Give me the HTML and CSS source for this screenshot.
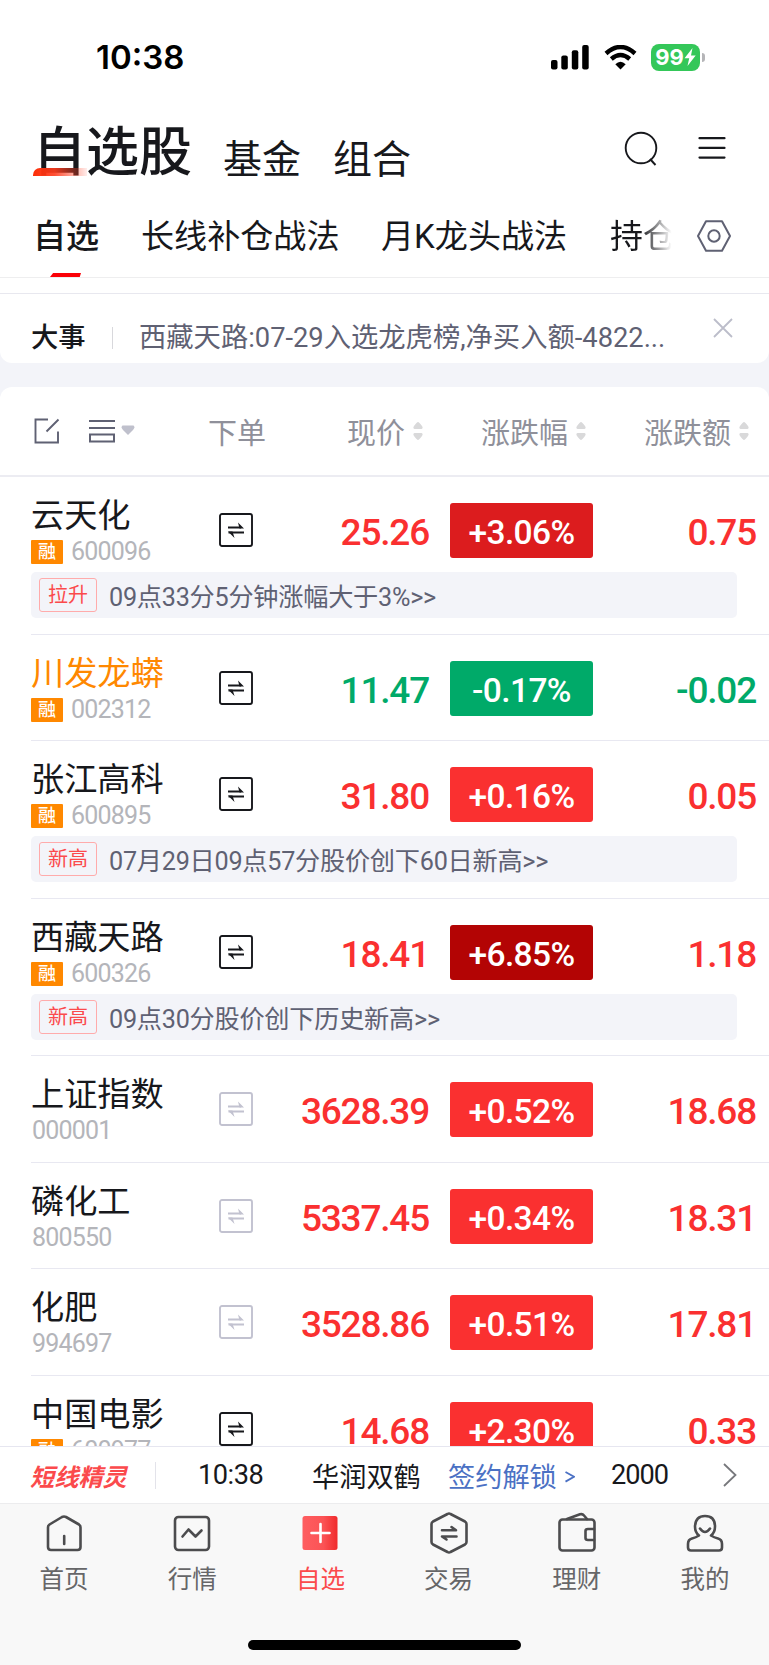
FILE: index.html
```html
<!DOCTYPE html>
<html lang="zh-CN">
<head>
  <meta charset="UTF-8" />
  <meta name="viewport" content="width=device-width, initial-scale=1" />
  <title>自选股</title>
  <link rel="stylesheet" href="styles.css">
</head>
<body>
  <svg class="defs" width="0" height="0">
    <symbol id="swap" viewBox="0 0 34 34">
      <rect x="1" y="1" width="32" height="32" rx="2" fill="none" stroke="currentColor" stroke-width="1.9"/>
      <path d="M9 14.500H22M9.500 19.500H25" fill="none" stroke="currentColor" stroke-width="1.9"/>
      <path d="M19 9.500L25 15.400H20.500ZM15.500 25L9 18.600H13.500Z" fill="currentColor"/>
    </symbol>
    <symbol id="sort" viewBox="0 0 10 20">
      <path d="M5 1Q6 1 9 5Q10.500 7.500 8.500 8H1.500Q-.5 7.500 1 5Q4 1 5 1ZM5 19Q6 19 9 15Q10.500 12.500 8.500 12H1.500Q-.5 12.500 1 15Q4 19 5 19Z" fill="#d9d9da"/>
    </symbol>
  </svg>

  <div class="phone">
    <div class="status">
      <span class="clock">10:38</span>
      <svg class="signal" width="38" height="25" viewBox="0 0 38 25">
        <rect x="0" y="15" width="6.500" height="9.500" rx="2"/>
        <rect x="10.300" y="10.500" width="6.500" height="14" rx="2"/>
        <rect x="20.800" y="5.200" width="6.500" height="19.300" rx="2"/>
        <rect x="31.200" y="0" width="6.500" height="24.500" rx="2"/>
      </svg>
      <svg class="wifi" width="33" height="25" viewBox="0 0 33 25">
        <path d="M2 8.500Q16.500-4.500 31 8.500" fill="none" stroke="#000" stroke-width="4.400"/>
        <path d="M7.300 14Q16.500 6 25.700 14" fill="none" stroke="#000" stroke-width="4.400"/>
        <path d="M16.500 24.500L11.300 19.300Q16.500 14 21.700 19.300Z"/>
      </svg>
      <div class="battery">
        <span>99</span>
        <svg width="12" height="18" viewBox="0 0 12 18"><path d="M8.500 0L.5 10.200H5.200L3.500 18L11.700 7.400H7Z" fill="#fff"/></svg>
      </div>
      <i class="battery-cap"></i>
    </div>

    <header class="top">
      <a class="title">自选股</a>
      <a class="other">基金</a>
      <a class="other">组合</a>
      <svg class="search" width="34" height="36" viewBox="0 0 34 36" fill="none" stroke="#17181c" stroke-width="1.900">
        <circle cx="17" cy="17" r="15.300"/><path d="M26 28L31.500 34"/>
      </svg>
      <svg class="menu" width="28" height="24" viewBox="0 0 28 24" stroke="#17181c" stroke-width="2.200" stroke-linecap="round">
        <path d="M1.500 2.200H26.500M1.500 11.900H26.500M1.500 21.600H26.500"/>
      </svg>
    </header>

    <nav class="groups">
      <a class="active">自选</a>
      <a class="g2">长线补仓战法</a>
      <a class="g3">月K龙头战法</a>
      <a class="g4">持仓</a>
      <svg width="36" height="34" viewBox="0 0 36 34" fill="none" stroke="#5f6173" stroke-width="2" stroke-linejoin="round">
        <path d="M10 2.200H26L34 17L26 31.700H10L2 17Z"/><circle cx="18" cy="17" r="5.700"/>
      </svg>
    </nav>

    <div class="notice">
      <b>大事</b>
      <i></i>
      <span>西藏天路:07-29入选龙虎榜,净买入额-4822...</span>
      <svg width="20" height="20" viewBox="0 0 20 20" stroke="#bcbdca" stroke-width="1.800"><path d="M1 1L19 19M19 1L1 19"/></svg>
    </div>

    <main class="list">
      <div class="row head">
        <div class="tools">
          <svg width="26" height="26" viewBox="0 0 26 26" fill="none" stroke="#5f6173" stroke-width="1.900">
            <path d="M14 1.500H1.500V24.500H24V13.500M12.500 13.500L24.500 1.500"/>
          </svg>
          <svg class="layout" width="46" height="24" viewBox="0 0 46 24" fill="none" stroke="#5f6173" stroke-width="2">
            <path d="M0 2H26M0 9H26M1 15.500H25V22.500H1Z"/>
            <path d="M33.500 6.500H44.500Q46.500 8 44 11L39 16L34 11Q31.500 8 33.500 6.500Z" fill="#bfc0cc" stroke="none"/>
          </svg>
        </div>
        <span class="order">下单</span>
        <span class="col">现价<svg><use href="#sort"/></svg></span>
        <span class="col c2">涨跌幅<svg><use href="#sort"/></svg></span>
        <span class="col c3">涨跌额<svg><use href="#sort"/></svg></span>
      </div>

      <section class="stock">
        <div class="row">
          <div class="name">云天化<small><em>融</em>600096</small></div>
          <svg class="swap"><use href="#swap"/></svg>
          <span class="price">25.26</span><span class="pct strong">+3.06%</span><span class="diff">0.75</span>
        </div>
        <div class="alert"><b>拉升</b>09点33分5分钟涨幅大于3%&gt;&gt;</div>
      </section>
      <section class="stock down">
        <div class="row">
          <div class="name hot">川发龙蟒<small><em>融</em>002312</small></div>
          <svg class="swap"><use href="#swap"/></svg>
          <span class="price">11.47</span><span class="pct">-0.17%</span><span class="diff">-0.02</span>
        </div>
      </section>
      <section class="stock">
        <div class="row">
          <div class="name">张江高科<small><em>融</em>600895</small></div>
          <svg class="swap"><use href="#swap"/></svg>
          <span class="price">31.80</span><span class="pct">+0.16%</span><span class="diff">0.05</span>
        </div>
        <div class="alert"><b>新高</b>07月29日09点57分股价创下60日新高&gt;&gt;</div>
      </section>
      <section class="stock">
        <div class="row">
          <div class="name">西藏天路<small><em>融</em>600326</small></div>
          <svg class="swap"><use href="#swap"/></svg>
          <span class="price">18.41</span><span class="pct deep">+6.85%</span><span class="diff">1.18</span>
        </div>
        <div class="alert"><b>新高</b>09点30分股价创下历史新高&gt;&gt;</div>
      </section>
      <section class="stock">
        <div class="row">
          <div class="name">上证指数<small>000001</small></div>
          <svg class="swap off"><use href="#swap"/></svg>
          <span class="price">3628.39</span><span class="pct">+0.52%</span><span class="diff">18.68</span>
        </div>
      </section>
      <section class="stock">
        <div class="row">
          <div class="name">磷化工<small>800550</small></div>
          <svg class="swap off"><use href="#swap"/></svg>
          <span class="price">5337.45</span><span class="pct">+0.34%</span><span class="diff">18.31</span>
        </div>
      </section>
      <section class="stock">
        <div class="row">
          <div class="name">化肥<small>994697</small></div>
          <svg class="swap off"><use href="#swap"/></svg>
          <span class="price">3528.86</span><span class="pct">+0.51%</span><span class="diff">17.81</span>
        </div>
      </section>
      <section class="stock">
        <div class="row">
          <div class="name">中国电影<small><em>融</em>600977</small></div>
          <svg class="swap"><use href="#swap"/></svg>
          <span class="price">14.68</span><span class="pct">+2.30%</span><span class="diff">0.33</span>
        </div>
      </section>
    </main>

    <div class="ticker">
      <b>短线精灵</b>
      <i></i>
      <span class="time">10:38</span>
      <span class="who">华润双鹤</span>
      <a>签约解锁 <svg width="10" height="12" viewBox="0 0 10 12" fill="none" stroke="#4b71c4" stroke-width="1.800"><path d="M.5 1L9 5.800L.5 10.600"/></svg></a>
      <span class="amount">2000</span>
      <svg width="14" height="24" viewBox="0 0 14 24" fill="none" stroke="#77787c" stroke-width="1.800"><path d="M1 1L12.500 12L1 23"/></svg>
    </div>

    <footer class="tabbar">
      <a>
        <svg viewBox="0 0 44 44"><path d="M22 5.500Q23 5.500 24 6L37 13.500Q38.500 14.500 38.500 16.500V36Q38.500 39 35.500 39H9Q6 39 6 36V16.500Q6 14.500 7.500 13.500L20 6Q21 5.500 22 5.500ZM22.200 25V33"/></svg>
        首页
      </a>
      <a>
        <svg viewBox="0 0 44 44"><rect x="5" y="6" width="34" height="33" rx="3.500"/><path d="M12.500 25.500L18.500 18.500L25.500 25.500L31.500 19.500"/></svg>
        行情
      </a>
      <a class="on">
        <svg viewBox="0 0 44 44">
          <defs><linearGradient id="red"><stop offset="0" stop-color="#fe5d60"/><stop offset=".6" stop-color="#fb5355"/><stop offset="1" stop-color="#f02a2b"/></linearGradient></defs>
          <rect x="4.500" y="5" width="35" height="34" rx="2.500" fill="url(#red)" stroke="none"/><path d="M13.500 22H31.500M22.500 13V31" stroke="#fff"/>
        </svg>
        自选
      </a>
      <a>
        <svg viewBox="0 0 44 44"><path d="M20.500 3Q22 2 23.500 3L38 10.500Q39.500 11.500 39.500 13V31Q39.500 32.500 38 33.500L23.500 41Q22 42 20.500 41L6 33.500Q4.500 32.500 4.500 31V13Q4.500 11.500 6 10.500Z"/><path d="M15 19.300H29L24.500 16M29.500 25.500H15L19.500 28.500"/></svg>
        交易
      </a>
      <a>
        <svg viewBox="0 0 44 44"><rect x="4.500" y="8.500" width="35" height="31" rx="3"/><path d="M12 8L25 3.300Q27.500 2.500 29 4.500L32 8M39 18H33Q30.500 18 30.500 20V27Q30.500 29 33 29H39"/></svg>
        理财
      </a>
      <a>
        <svg viewBox="0 0 44 44"><path d="M16 24.500Q12 21.500 12 15.500Q12.500 5 22 5Q32 5 32 15.500Q32 21.500 28 24.500Q31 26.500 35 27.500Q39 28.500 39 33V36.500Q39 39.500 36 39.500H8Q5 39.500 5 36.500V33Q5 28.500 9 27.500Q13 26.500 16 24.500ZM17 17.500Q22 24.500 27 17.500"/></svg>
        我的
      </a>
      <div class="home-bar"></div>
    </footer>
  </div>
</body>
</html>
```

FILE: styles.css
```css
* {
  box-sizing: border-box;
}
body {
  margin: 0;
  font-family: Roboto, "Noto Sans CJK SC", sans-serif;
  color: #17181c;
  background: #fff;
}
i, em {
  font-style: normal;
}
svg {
  display: block;
  flex: none;
}
.defs {
  position: absolute;
}
.phone {
  width: 769px;
  height: 1665px;
  display: flex;
  flex-direction: column;
  overflow: hidden;
  white-space: nowrap;
}

/* status bar */
.status {
  height: 114px;
  flex: none;
  display: flex;
  align-items: center;
  padding-left: 96px;
  color: #000;
}
.clock {
  width: 455px;
  font: 600 33px/40px Inter, sans-serif;
}
.wifi {
  margin-left: 15px;
}
.battery {
  width: 49px;
  height: 27px;
  margin-left: 14px;
  border-radius: 8px;
  background: #34c759;
  color: #fff;
  font: 700 22px/27px Inter, sans-serif;
  display: flex;
  align-items: center;
  justify-content: center;
}
.battery-cap {
  width: 3px;
  height: 9px;
  margin-left: 2px;
  border-radius: 0 3px 3px 0;
  background: #b5b5b8;
}

/* page title tabs */
.top {
  height: 77px;
  flex: none;
  display: flex;
  align-items: center;
  padding-left: 33px;
}
.title {
  width: 190px;
  font-size: 53px;
  font-weight: 500;
  line-height: 72px;
  position: relative;
}
.title::before {
  content: "";
  position: absolute;
  left: 0;
  bottom: 13px;
  width: 54px;
  height: 8px;
  border-radius: 7px 0 0 0;
  background: linear-gradient(90deg, #fc2d06, rgba(255, 60, 30, .9) 40%, rgba(255, 80, 60, .1));
}
.other {
  width: 110px;
  margin-top: 7px;
  font-size: 39px;
}
.search {
  margin-left: 181px;
  margin-top: -7px;
}
.menu {
  margin-left: 40px;
  margin-top: -9px;
}

/* watchlist groups */
.groups {
  height: 87px;
  flex: none;
  display: flex;
  align-items: center;
  padding-left: 33px;
  font-size: 33.1px;
  border-bottom: 1px solid #eeeeef;
}
.groups .active {
  width: 108px;
  height: 86px;
  line-height: 92px;
  font-weight: 500;
  position: relative;
}
.active::after {
  content: "";
  position: absolute;
  left: 17px;
  bottom: 0;
  width: 31px;
  height: 4px;
  background: #fb0007;
  clip-path: polygon(10% 0, 100% 0, 96% 100%, 0 100%);
}
.g2 {
  width: 240px;
}
.g3 {
  width: 229px;
}
.g4 {
  width: 67px;
  -webkit-mask-image: linear-gradient(90deg, #000 46%, transparent 92%);
  mask-image: linear-gradient(90deg, #000 46%, transparent 92%);
}
.groups svg {
  margin-left: 19px;
  margin-top: 3px;
}

/* notice */
.notice {
  height: 70px;
  flex: none;
  display: flex;
  align-items: center;
  margin-top: 15px;
  padding: 13px 0 0 31px;
  border-top: 1px solid #e8e8ef;
  border-radius: 0 0 12px 12px;
  background: #fff;
  box-shadow: 0 15px 0 #f3f4f9;
  font-size: 27.3px;
  color: #5f6173;
}
.notice b {
  width: 81px;
  font-weight: 500;
  color: #17181c;
}
.notice i {
  width: 1px;
  height: 22px;
  margin-top: 6px;
  background: #d8d8dc;
}
.notice span {
  width: 574px;
  padding-left: 26px;
  margin-right: 26px;
}
.notice svg {
  margin-top: -14px;
}

/* stock list */
.list {
  height: 1083px;
  flex: none;
  overflow: hidden;
  padding-top: 24px;
  background: #f3f4f9;
}
.row {
  display: grid;
  grid-template-columns: 188px 35px 176px 163px 163px;
  height: 106px;
  padding-left: 31px;
}
.head {
  height: 90px;
  grid-template-columns: 177px 139px 134px 163px 140px;
  align-items: center;
  font-size: 29px;
  color: #8f909a;
  background: #fff;
  border-radius: 12px 12px 0 0;
  border-bottom: 2px solid #ececf2;
}
.tools {
  display: flex;
  align-items: center;
  padding-left: 3px;
  gap: 29px;
}
.col {
  display: flex;
  align-items: center;
}
.col svg {
  width: 10px;
  height: 20px;
  margin-left: 8px;
}
.stock {
  background: linear-gradient(#e8e8f1, #e8e8f1) 31px 100% / 100% 1px no-repeat #fff;
  height: 106.5px;
}
.stock:has(.alert) {
  height: 157.5px;
}
.name {
  padding: 14px 0 0;
  font-size: 33.2px;
  line-height: 49px;
}
.hot {
  color: #ff8800;
}
.name small {
  display: flex;
  align-items: center;
  height: 24px;
  padding-left: 1px;
  font-size: 25px;
  line-height: 26px;
  letter-spacing: -.8px;
  color: #b4b5ba;
}
.name em {
  width: 32px;
  height: 24px;
  margin: 0 8px 0 -1px;
  background: #ff8800;
  border-radius: 1px;
  color: #fff;
  font-size: 18px;
  font-weight: 500;
  letter-spacing: 0;
  line-height: 23px;
  text-align: center;
}
.swap {
  width: 34px;
  height: 34px;
  margin-top: 36px;
}
.swap.off {
  color: #c2c2d0;
}
.price, .diff {
  padding-right: 1px;
  text-align: right;
  font-size: 37px;
  font-weight: 500;
  letter-spacing: -1.2px;
  line-height: 112px;
  color: #fa3030;
}
.diff {
  padding-right: 0;
}
.pct {
  width: 143px;
  height: 55px;
  margin: 26px 0 0 20px;
  border-radius: 3px;
  background: #fa3030;
  color: #fff;
  font-size: 33.5px;
  font-weight: 500;
  letter-spacing: -.6px;
  line-height: 60px;
  text-align: center;
}
.pct.strong {
  background: #dc1c1e;
}
.pct.deep {
  background: #b30404;
}
.down .price, .down .diff {
  color: #00aa69;
}
.down .pct {
  background: #00aa69;
}
.alert {
  display: flex;
  align-items: center;
  width: 706px;
  height: 46px;
  margin: -11px 0 0 31px;
  padding-left: 8px;
  border-radius: 5px;
  background: #f3f4f9;
  color: #5f6173;
  font-size: 25.2px;
  letter-spacing: -.25px;
}
.alert b {
  width: 58px;
  height: 34px;
  margin-right: 12px;
  border: 1px solid #ffabab;
  border-radius: 3px;
  color: #fb4a4c;
  font-size: 20px;
  font-weight: 400;
  letter-spacing: 0;
  line-height: 33px;
  text-align: center;
}

/* short-term ticker */
.ticker {
  height: 57px;
  flex: none;
  display: flex;
  align-items: center;
  padding-left: 30px;
  border-top: 1px solid #e6e6f0;
  background: #fff;
  font-size: 27.2px;
}
.ticker b {
  width: 125px;
  font-size: 24.2px;
  font-weight: 700;
  font-style: italic;
  color: #fb4a4c;
}
.ticker i {
  width: 1px;
  height: 27px;
  background: #e3e3ea;
}
.time {
  width: 156px;
  padding-left: 42px;
  letter-spacing: -.5px;
}
.who {
  width: 136px;
}
.ticker a {
  display: flex;
  align-items: center;
  width: 163px;
  color: #4b71c4;
}
.ticker a svg {
  margin: 4px 0 0 8px;
}
.amount {
  width: 112px;
  letter-spacing: -1px;
}

/* bottom tabs */
.tabbar {
  height: 162px;
  flex: none;
  display: grid;
  grid-template-columns: repeat(6, 1fr);
  grid-template-rows: 136px 1fr;
  border-top: 1px solid #ececee;
  background: #f8f8f8;
}
.tabbar a {
  padding-top: 7px;
  font-size: 24.5px;
  line-height: 43px;
  text-align: center;
  color: #666668;
}
.tabbar svg {
  width: 44px;
  height: 44px;
  margin: 0 auto 3px;
  fill: none;
  stroke: #4c4c4e;
  stroke-width: 2.6;
  stroke-linecap: round;
  stroke-linejoin: round;
}
.tabbar .on {
  color: #fb4a4c;
}
.home-bar {
  grid-column: 1 / -1;
  justify-self: center;
  width: 273px;
  height: 10px;
  border-radius: 5px;
  background: #000;
}
```
